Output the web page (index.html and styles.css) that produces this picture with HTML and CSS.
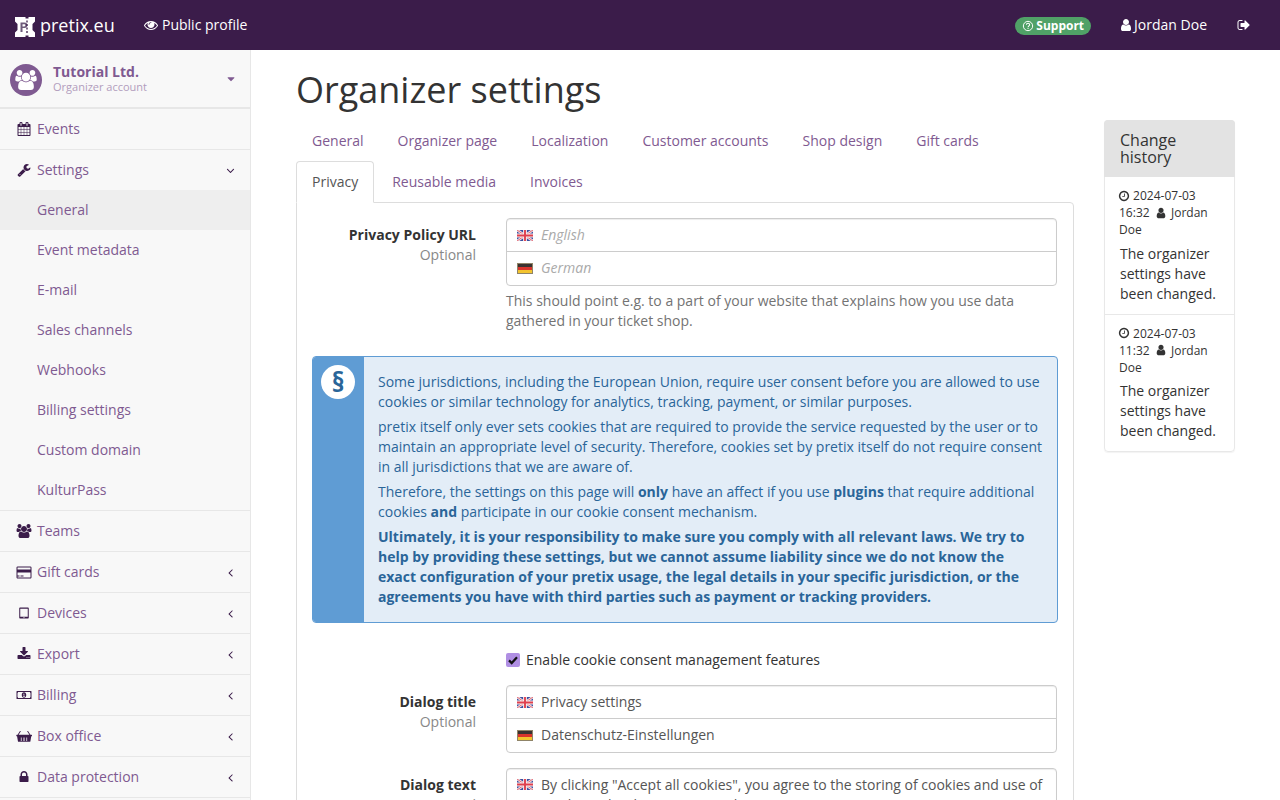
FILE: index.html
```html
<!DOCTYPE html>
<html lang="en">
<head>
<meta charset="utf-8">
<title>Organizer settings</title>
<link rel="stylesheet" href="styles.css">
</head>
<body>
<svg class="defs" width="0" height="0">
  <defs>
    <symbol id="i-user" viewBox="0 0 1792 1792"><path d="M1536 1399q0 109-62.5 187t-150.5 78h-854q-88 0-150.5-78t-62.5-187q0-85 8.5-160.5t31.5-152 58.5-131 94-89 134.5-34.5q131 128 313 128t313-128q76 0 134.5 34.5t94 89 58.5 131 31.5 152 8.5 160.5zm-256-887q0 159-112.5 271.5t-271.5 112.5-271.5-112.5-112.5-271.5 112.5-271.5 271.5-112.5 271.5 112.5 112.5 271.5z"/></symbol>
    <symbol id="i-lock" viewBox="0 0 1792 1792"><path d="M640 768h512v-192q0-106-75-181t-181-75-181 75-75 181v192zm832 96v576q0 40-28 68t-68 28h-960q-40 0-68-28t-28-68v-576q0-40 28-68t68-28h32v-192q0-184 132-316t316-132 316 132 132 316v192h32q40 0 68 28t28 68z"/></symbol>
    <symbol id="i-left" viewBox="0 0 1792 1792"><path d="M1203 544q0 13-10 23l-393 393 393 393q10 10 10 23t-10 23l-50 50q-10 10-23 10t-23-10l-466-466q-10-10-10-23t10-23l466-466q10-10 23-10t23 10l50 50q10 10 10 23z"/></symbol>
    <symbol id="i-down" viewBox="0 0 1792 1792"><path d="M1395 736q0 13-10 23l-466 466q-10 10-23 10t-23-10l-466-466q-10-10-10-23t10-23l50-50q10-10 23-10t23 10l393 393 393-393q10-10 23-10t23 10l50 50q10 10 10 23z"/></symbol>
    <symbol id="i-caret" viewBox="0 0 1792 1792"><path d="M1408 704q0 26-19 45l-448 448q-19 19-45 19t-45-19l-448-448q-19-19-19-45t19-45 45-19h896q26 0 45 19t19 45z"/></symbol>
    <symbol id="i-eye" viewBox="0 0 1792 1792"><path d="M1664 960q-152-236-381-353 61 104 61 225 0 185-131.5 316.5t-316.5 131.5-316.5-131.5-131.5-316.5q0-121 61-225-229 117-381 353 133 205 333.5 326.5t434.5 121.5 434.5-121.5 333.5-326.5zm-720-384q0-20-14-34t-34-14q-125 0-214.5 89.5t-89.5 214.5q0 20 14 34t34 14 34-14 14-34q0-86 61-147t147-61q20 0 34-14t14-34zm848 384q0 34-20 69-140 230-376.5 368.5t-499.5 138.5-499.5-139-376.5-368q-20-35-20-69t20-69q140-229 376.5-368t499.5-139 499.5 139 376.5 368q20 35 20 69z"/></symbol>
    <symbol id="i-users" viewBox="0 0 1920 1792"><path d="M593 896q-162 5-265 128h-134q-82 0-138-40.5t-56-118.5q0-353 124-353 6 0 43.5 21t97.5 42.5 119 21.5q67 0 133-23-5 37-5 66 0 139 81 256zm1071 637q0 120-73 189.5t-194 69.5h-874q-121 0-194-69.5t-73-189.5q0-53 3.5-103.5t14-109 26.5-108.5 43-97.5 62-81 85.5-53.5 111.5-20q10 0 43 21.5t73 48 107 48 135 21.5 135-21.5 107-48 73-48 43-21.5q61 0 111.5 20t85.5 53.5 62 81 43 97.5 26.5 108.5 14 109 3.5 103.5zm-1024-1277q0 106-75 181t-181 75-181-75-75-181 75-181 181-75 181 75 75 181zm704 384q0 159-112.5 271.5t-271.5 112.5-271.5-112.5-112.5-271.5 112.5-271.5 271.5-112.5 271.5 112.5 112.5 271.5zm576 225q0 78-56 118.5t-138 40.5h-134q-103-123-265-128 81-117 81-256 0-29-5-66 66 23 133 23 59 0 119-21.5t97.5-42.5 43.5-21q124 0 124 353zm-128-609q0 106-75 181t-181 75-181-75-75-181 75-181 181-75 181 75 75 181z"/></symbol>
    <symbol id="i-wrench" viewBox="0 0 1792 1792"><path d="M448 1472q0-26-19-45t-45-19-45 19-19 45 19 45 45 19 45-19 19-45zm644-420l-682 682q-37 37-90 37-52 0-91-37l-106-108q-38-36-38-90 0-53 38-91l681-681q39 98 114.5 173.500t173.500 114.500zm634-435q0 39-23 106-47 134-164.500 217.500t-258.500 83.500q-185 0-316.500-131.500t-131.500-316.500 131.500-316.500 316.500-131.500q58 0 121.500 16.500t107.500 46.500q16 11 16 28t-16 28l-293 169v224l193 107q5-3 79-48.500t135.500-81 70.500-35.500q15 0 23.500 10t8.500 25z"/></symbol>
    <symbol id="i-cal" viewBox="0 0 1664 1792"><path d="M128 1664h288v-288h-288v288zm352 0h320v-288h-320v288zm-352-352h288v-320h-288v320zm352 0h320v-320h-320v320zm-352-384h288v-288h-288v288zm736 736h320v-288h-320v288zm-384-736h320v-288h-320v288zm768 736h288v-288h-288v288zm-384-352h320v-320h-320v320zm-352-864v-288q0-13-9.500-22.500t-22.500-9.500h-64q-13 0-22.500 9.500t-9.500 22.500v288q0 13 9.500 22.500t22.500 9.500h64q13 0 22.500-9.500t9.500-22.500zm736 864h288v-320h-288v320zm-384-384h320v-288h-320v288zm384 0h288v-288h-288v288zm32-480v-288q0-13-9.500-22.500t-22.500-9.500h-64q-13 0-22.500 9.500t-9.500 22.500v288q0 13 9.500 22.500t22.500 9.500h64q13 0 22.500-9.500t9.500-22.500zm384-64v1280q0 52-38 90t-90 38h-1408q-52 0-90-38t-38-90v-1280q0-52 38-90t90-38h128v-96q0-66 47-113t113-47h64q66 0 113 47t47 113v96h384v-96q0-66 47-113t113-47h64q66 0 113 47t47 113v96h128q52 0 90 38t38 90z"/></symbol>
    <symbol id="i-card" viewBox="0 -64 1920 1792"><path d="M1760 128q66 0 113 47t47 113v1216q0 66-47 113t-113 47h-1600q-66 0-113-47t-47-113v-1216q0-66 47-113t113-47h1600zm-1600 128q-13 0-22.500 9.500t-9.500 22.500v224h1664v-224q0-13-9.500-22.500t-22.500-9.500h-1600zm1600 1280q13 0 22.500-9.500t9.500-22.500v-608h-1664v608q0 13 9.500 22.500t22.500 9.500h1600zm-1632-128v-128h256v128h-256zm384 0v-128h384v128h-384z"/></symbol>
    <symbol id="i-tablet" viewBox="0 0 1792 1792"><path fill-rule="evenodd" d="M384 192h1024q96 0 96 96v1216q0 96-96 96h-1024q-96 0-96-96v-1216q0-96 96-96zm32 160v1024h960v-1024zm480 1060a64 64 0 1 0 .1 0z"/></symbol>
    <symbol id="i-download" viewBox="0 0 1792 1792"><path d="M1344 1344q0-26-19-45t-45-19-45 19-19 45 19 45 45 19 45-19 19-45zm256 0q0-26-19-45t-45-19-45 19-19 45 19 45 45 19 45-19 19-45zm128-224v320q0 40-28 68t-68 28h-1472q-40 0-68-28t-28-68v-320q0-40 28-68t68-28h465l135 136q58 56 136 56t136-56l136-136h464q40 0 68 28t28 68zm-325-569q17 41-14 70l-448 448q-18 19-45 19t-45-19l-448-448q-31-29-14-70 17-39 59-39h256v-448q0-26 19-45t45-19h256q26 0 45 19t19 45v448h256q42 0 59 39z"/></symbol>
    <symbol id="i-money" viewBox="0 0 1920 1792"><path fill-rule="evenodd" d="M64 384h1792q64 0 64 64v896q0 64-64 64h-1792q-64 0-64-64v-896q0-64 64-64zm128 128q0 128-64 128v512q64 0 64 128h1536q0-128 64-128v-512q-64 0-64-128zm768 32c180 0 290 160 290 352s-110 352-290 352-290-160-290-352 110-352 290-352zm-90 190v90h50v240h-60v80h200v-80h-60v-330h-70z"/></symbol>
    <symbol id="i-basket" viewBox="0 0 2048 1792"><path fill-rule="evenodd" d="M200 736l310-470q30-40 75-15t20 70l-275 415h1388l-275-415q-25-45 20-70t75 15l310 470h136q64 0 64 64v64q0 64-64 64h-32l-110 640q-12 64-76 64h-1444q-64 0-76-64l-110-640h-32q-64 0-64-64v-64q0-64 64-64zm420 352v440h96v-440zm340 0v440h128v-440zm368 0v440h96v-440z"/></symbol>
    <symbol id="i-signout" viewBox="0 0 1792 1792"><path d="M704 1440q0 4 1 20t.5 26.500-3 23.500-10 19.500-20.500 6.500h-320q-119 0-203.500-84.500t-84.500-203.500v-704q0-119 84.500-203.500t203.500-84.500h320q13 0 22.500 9.500t9.500 22.500q0 4 1 20t.5 26.500-3 23.500-10 19.500-20.500 6.500h-320q-66 0-113 47t-47 113v704q0 66 47 113t113 47h288 11 13l11.500 1 11.500 3 8 5.500 7 9 2 13.500zm928-544q0 26-19 45l-544 544q-19 19-45 19t-45-19-19-45v-288h-448q-26 0-45-19t-19-45v-384q0-26 19-45t45-19h448v-288q0-26 19-45t45-19 45 19l544 544q19 19 19 45z"/></symbol>
    <symbol id="i-clock" viewBox="0 0 1792 1792"><path d="M1024 544v448q0 14-9 23t-23 9h-320q-14 0-23-9t-9-23v-64q0-14 9-23t23-9h224v-352q0-14 9-23t23-9h64q14 0 23 9t9 23zm416 352q0-148-73-273t-198-198-273-73-273 73-198 198-73 273 73 273 198 198 273 73 273-73 198-198 73-273zm224 0q0 209-103 385.500t-279.500 279.500-385.500 103-385.500-103-279.500-279.500-103-385.500 103-385.500 279.500-279.500 385.500-103 385.500 103 279.500 279.500 103 385.500z"/></symbol>
    <symbol id="i-q" viewBox="0 0 16 16"><circle cx="8" cy="8" r="6.200" fill="none" stroke="currentColor" stroke-width="1.300"/><path d="M5.900 6.400c0-1.300 1-2 2.200-2s2.100.8 2.100 1.900c0 1.600-2 1.600-2 3.100" fill="none" stroke="currentColor" stroke-width="1.400"/><rect x="7.300" y="10.300" width="1.500" height="1.500"/></symbol>
    <symbol id="f-uk" viewBox="0 0 16 11">
      <rect width="16" height="11" fill="#3d4f9f"/>
      <path d="M0 0l16 11M16 0L0 11" stroke="#f4e6e8" stroke-width="2.600"/>
      <path d="M0 0l16 11M16 0L0 11" stroke="#dc4a58" stroke-width=".8"/>
      <path d="M8 0v11M0 5.500h16" stroke="#f6eeee" stroke-width="3.800"/>
      <path d="M8 0v11M0 5.500h16" stroke="#e0404e" stroke-width="1.900"/>
    </symbol>
    <symbol id="f-de" viewBox="0 0 16 11">
      <rect width="16" height="11" fill="#b59a3a"/>
      <rect x=".5" y=".5" width="15" height="10" fill="none" stroke="#8f8468"/>
      <rect x="1" y="1" width="14" height="3" fill="#3a3230"/>
      <rect x="1" y="4" width="14" height="3" fill="#d9342c"/>
      <rect x="1" y="7" width="14" height="3" fill="#f3c42f"/>
    </symbol>
  </defs>
</svg>

<div class="page">
  <header class="topbar">
    <a class="brand">
      <svg class="logo" viewBox="0 0 20 20" width="20" height="20">
        <path fill="#fff" d="M0 0H10.500V1.500H13.500V0H20V4.500L17.500 7V13L20 15.500V20H13.500V18.500H10.500V20H0V15.500L2.500 13V7L0 4.500z"/>
        <path fill="#6d5a7a" d="M5.500 5.500h4c2 0 2.800 1.200 2.800 2.700s-1 2.800-2.800 2.800H7.500v4h-2z"/>
        <path fill="#fff" d="M7.500 7.200v2.200h1.800c.7 0 1-.5 1-1.100s-.3-1.100-1-1.100z"/>
        <path d="M12 3.500V17" stroke="#3b1c4a" stroke-width="1.300" stroke-dasharray="2 1.500"/>
      </svg>
      <span class="brand-name">pretix.eu</span>
    </a>
    <a class="toplink"><svg class="ic"><use href="#i-eye"/></svg> Public profile</a>
    <div class="topright">
      <a class="support"><svg class="ic-q"><use href="#i-q"/></svg> Support</a>
      <a class="toplink user"><svg class="ic"><use href="#i-user"/></svg> Jordan Doe</a>
      <a class="toplink signout"><svg class="ic"><use href="#i-signout"/></svg></a>
    </div>
  </header>

  <div class="body">
    <aside class="sidebar">
      <div class="org">
        <span class="avatar"><svg><use href="#i-users"/></svg></span>
        <div class="org-text">
          <div class="org-name">Tutorial Ltd.</div>
          <div class="org-sub">Organizer account</div>
        </div>
        <svg class="org-caret"><use href="#i-caret"/></svg>
      </div>
      <nav>
        <a class="nav"><svg class="nav-ic"><use href="#i-cal"/></svg>Events</a>
        <div class="group">
          <a class="nav plain"><svg class="nav-ic"><use href="#i-wrench"/></svg>Settings<svg class="chev"><use href="#i-down"/></svg></a>
          <a class="sub active">General</a>
          <a class="sub">Event metadata</a>
          <a class="sub">E-mail</a>
          <a class="sub">Sales channels</a>
          <a class="sub">Webhooks</a>
          <a class="sub">Billing settings</a>
          <a class="sub">Custom domain</a>
          <a class="sub">KulturPass</a>
        </div>
        <a class="nav"><svg class="nav-ic"><use href="#i-users"/></svg>Teams</a>
        <a class="nav"><svg class="nav-ic"><use href="#i-card"/></svg>Gift cards<svg class="chev"><use href="#i-left"/></svg></a>
        <a class="nav"><svg class="nav-ic"><use href="#i-tablet"/></svg>Devices<svg class="chev"><use href="#i-left"/></svg></a>
        <a class="nav"><svg class="nav-ic"><use href="#i-download"/></svg>Export<svg class="chev"><use href="#i-left"/></svg></a>
        <a class="nav"><svg class="nav-ic"><use href="#i-money"/></svg>Billing<svg class="chev"><use href="#i-left"/></svg></a>
        <a class="nav"><svg class="nav-ic"><use href="#i-basket"/></svg>Box office<svg class="chev"><use href="#i-left"/></svg></a>
        <a class="nav"><svg class="nav-ic"><use href="#i-lock"/></svg>Data protection<svg class="chev"><use href="#i-left"/></svg></a>
      </nav>
    </aside>

    <main class="main">
      <h1>Organizer settings</h1>
      <div class="columns">
        <div class="content">
          <ul class="tabs">
            <li><a>General</a></li>
            <li><a>Organizer page</a></li>
            <li><a>Localization</a></li>
            <li><a>Customer accounts</a></li>
            <li><a>Shop design</a></li>
            <li><a>Gift cards</a></li>
          </ul>
          <ul class="tabs second">
            <li class="current"><a>Privacy</a></li>
            <li><a>Reusable media</a></li>
            <li><a>Invoices</a></li>
          </ul>
          <div class="pane">
            <div class="field">
              <div class="label"><strong>Privacy Policy URL</strong><span>Optional</span></div>
              <div class="control">
                <div class="i18n">
                  <div class="row"><svg class="flag"><use href="#f-uk"/></svg><span class="ph">English</span></div>
                  <div class="row"><svg class="flag"><use href="#f-de"/></svg><span class="ph">German</span></div>
                </div>
                <p class="help">This should point e.g. to a part of your website that explains how you use data gathered in your ticket shop.</p>
              </div>
            </div>

            <div class="alert">
              <div class="alert-side"><span class="alert-badge">§</span></div>
              <div class="alert-body">
                <p>Some jurisdictions, including the European Union, require user consent before you are allowed to use cookies or similar technology for analytics, tracking, payment, or similar purposes.</p>
                <p>pretix itself only ever sets cookies that are required to provide the service requested by the user or to maintain an appropriate level of security. Therefore, cookies set by pretix itself do not require consent in all jurisdictions that we are aware of.</p>
                <p>Therefore, the settings on this page will <strong>only</strong> have an affect if you use <strong>plugins</strong> that require additional cookies <strong>and</strong> participate in our cookie consent mechanism.</p>
                <p><strong>Ultimately, it is your responsibility to make sure you comply with all relevant laws. We try to help by providing these settings, but we cannot assume liability since we do not know the exact configuration of your pretix usage, the legal details in your specific jurisdiction, or the agreements you have with third parties such as payment or tracking providers.</strong></p>
              </div>
            </div>

            <label class="check">
              <span class="box"><svg viewBox="0 0 14 14"><path d="M3 7.400l2.700 2.700L11 4.300" fill="none" stroke="#111" stroke-width="2.200"/></svg></span>
              Enable cookie consent management features
            </label>

            <div class="field title-field">
              <div class="label"><strong>Dialog title</strong><span>Optional</span></div>
              <div class="control">
                <div class="i18n">
                  <div class="row"><svg class="flag"><use href="#f-uk"/></svg><span>Privacy settings</span></div>
                  <div class="row"><svg class="flag"><use href="#f-de"/></svg><span>Datenschutz-Einstellungen</span></div>
                </div>
              </div>
            </div>

            <div class="field text-field">
              <div class="label"><strong>Dialog text</strong><span>Optional</span></div>
              <div class="control">
                <div class="i18n">
                  <div class="row area"><svg class="flag"><use href="#f-uk"/></svg><span>By clicking "Accept all cookies", you agree to the storing of cookies and use of similar technologies on your device.</span></div>
                </div>
              </div>
            </div>
          </div>
        </div>

        <aside class="history">
          <div class="history-head">Change history</div>
          <div class="entry">
            <div class="meta"><svg class="ic-s clock"><use href="#i-clock"/></svg> 2024-07-03 16:32 &nbsp;<svg class="ic-s who"><use href="#i-user"/></svg> Jordan Doe</div>
            <p>The organizer settings have been changed.</p>
          </div>
          <div class="entry">
            <div class="meta"><svg class="ic-s clock"><use href="#i-clock"/></svg> 2024-07-03 11:32 &nbsp;<svg class="ic-s who"><use href="#i-user"/></svg> Jordan Doe</div>
            <p>The organizer settings have been changed.</p>
          </div>
        </aside>
      </div>
    </main>
  </div>
</div>
</body>
</html>
```
FILE: styles.css
```css
* { box-sizing: border-box; }
html, body { margin: 0; padding: 0; height: 800px; overflow: hidden; }
body { font-family: "Open Sans", sans-serif; font-size: 14px; line-height: 20px; color: #333; background: #fff; }
.defs { position: absolute; }
a { color: inherit; text-decoration: none; }
svg { fill: currentColor; }

.page { height: 800px; overflow: hidden; display: flex; flex-direction: column; }
.topbar { height: 50px; flex: none; background: #3b1c4a; color: #fff; display: flex; align-items: center; padding-left: 15px; }
.brand { display: flex; align-items: center; width: 129px; }
.logo { margin-right: 5px; margin-top: 4px; }
.brand-name { font-size: 18px; }
.toplink { display: inline-flex; align-items: center; gap: 4px; }
.toplink.user { gap: 1px; }
.ic { width: 14px; height: 14px; }
.topright { margin-left: auto; display: flex; align-items: center; padding-right: 29px; }
.support { background: #50a167; border-radius: 10px; font-size: 12px; font-weight: 700; line-height: 18px; padding: 0 7px; height: 18px; display: inline-flex; align-items: center; gap: 2px; margin-right: 28px; margin-top: 2px; }
.ic-q { width: 12px; height: 12px; }
.signout { margin-left: 30px; }

.body { flex: 1; display: flex; min-height: 0; }
.sidebar { width: 251px; flex: none; background: #f8f8f8; border-right: 1px solid #e7e7e7; color: #7f5a91; }
.org { height: 59px; border-bottom: 2px solid #e7e7e7; display: flex; align-items: center; padding: 3px 15px 0 10px; }
.avatar { width: 32px; height: 32px; border-radius: 50%; background: #7f5a91; color: #fff; display: flex; align-items: center; justify-content: center; margin-right: 11px; }
.avatar svg { width: 22px; height: 20px; }
.org-text { flex: 1; margin-bottom: 4px; }
.org-name { font-weight: 700; line-height: 17px; }
.org-sub { font-size: 11px; line-height: 13px; color: #b29dbd; }
.org-caret { width: 12px; height: 12px; color: #7f5a91; margin: 0 -2px 2px 0; }
.nav { height: 41px; display: flex; align-items: center; padding-left: 16px; border-bottom: 1px solid #e7e7e7; }
.nav.plain { height: 40px; border-bottom: 0; }
.group { border-bottom: 1px solid #e7e7e7; }
.nav-ic { width: 16px; height: 14px; margin-right: 5px; color: #3b1c4a; flex: none; }
.chev { width: 13px; height: 13px; margin-left: auto; margin-right: 13px; color: #3b1c4a; flex: none; }
.sub { display: block; height: 40px; line-height: 40px; padding-left: 37px; }
.sub.active { background: #eee; }

.main { flex: 1; padding: 0 45px; min-width: 0; }
h1 { font-size: 36px; font-weight: 400; line-height: 40px; color: #333; margin: 20px 0 10px; }
.columns { display: flex; gap: 30px; align-items: flex-start; }
.content { width: 778px; flex: none; }
.tabs { list-style: none; margin: 0; padding: 0; display: flex; gap: 2px; height: 41px; color: #7f5a91; }
.tabs a { display: block; height: 42px; padding: 10px 15px; border: 1px solid transparent; border-radius: 4px 4px 0 0; }
.tabs.second { position: relative; z-index: 1; }
.tabs.second .current a { background: #fff; border-color: #ddd #ddd #fff; color: #555; }
.pane { border: 1px solid #ddd; border-radius: 0 4px 4px 4px; padding: 15px; }

.field { display: flex; }
.label { width: 164px; flex: none; text-align: right; padding-top: 7px; }
.label strong { display: block; font-weight: 700; }
.label span { display: block; color: #888; }
.control { margin-left: 30px; width: 551px; }
.i18n { border: 1px solid #ccc; border-radius: 4px; box-shadow: inset 0 1px 1px rgba(0,0,0,.075); }
.row { height: 32px; display: flex; align-items: center; padding: 0 0 0 10px; color: #555; }
.row + .row { border-top: 1px solid #ccc; height: 34px; padding-bottom: 1px; }
.flag { width: 16px; height: 11px; margin-right: 8px; flex: none; }
.ph { font-style: italic; color: #aaa; }
.row.area { height: 60px; align-items: flex-start; padding: 6px 8px 0 10px; }
.row.area .flag { margin-top: 4px; }
.help { margin: 5px 0 0; color: #737373; }

.alert { display: flex; margin-top: 25px; border: 1px solid #5f9cd4; border-radius: 4px; color: #2a6599; background: #e3edf7; overflow: hidden; height: 267px; width: 746px; }
.alert-side { width: 51px; flex: none; background: #5f9cd4; display: flex; justify-content: flex-start; padding: 8px 0 0 8px; }
.alert-badge { width: 34px; height: 34px; border-radius: 50%; background: #fff; color: #2a6599; font-weight: 700; font-size: 26px; line-height: 34px; text-align: center; }
.alert-body { padding: 15px 14px 0; }
.alert-body p { margin: 0 0 5px; }

.check { display: flex; align-items: center; margin: 27px 0 0 194px; height: 20px; color: #333; gap: 6px; }
.box { width: 14px; height: 14px; background: #b08fe3; border-radius: 2px; display: flex; }
.box svg { width: 14px; height: 14px; }
.title-field { margin-top: 15px; }
.text-field { margin-top: 15px; }

.history { width: 131px; flex: none; border: 1px solid #e8e8e8; border-radius: 4px; box-shadow: 0 1px 1px rgba(0,0,0,.05); }
.history-head { background: #e3e3e3; font-size: 16px; line-height: 17px; padding: 12px 15px 11px 16px; color: #333; margin: -1px -1px 0; border-radius: 4px 4px 0 0; }
.entry { padding: 10.100px 14px 10px 15px; }
.entry:last-child { padding-bottom: 9.500px; }
.entry + .entry { border-top: 1px solid #e8e8e8; }
.meta { font-size: 12px; line-height: 1.42857; color: #333; margin-left: -1px; }
.ic-s { width: 12px; height: 12px; vertical-align: -1.500px; }
.ic-s.clock { margin-left: -1px; }
.ic-s.who { margin: 0 1px 0 -1px; }
.entry p { margin: 5px 0 0; line-height: 20px; }
```
